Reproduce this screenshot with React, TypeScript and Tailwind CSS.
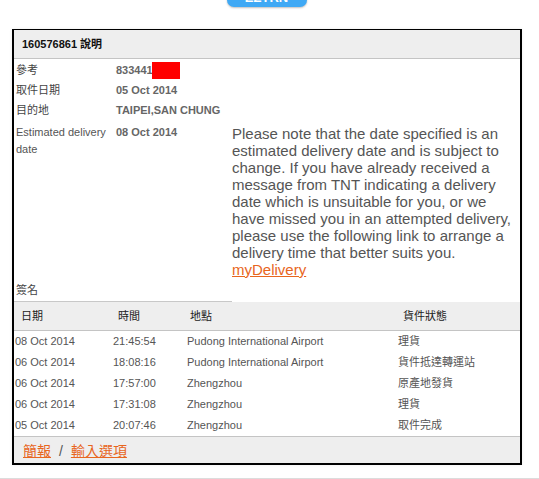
import React from 'react';

const latin = { fontFamily: '"Liberation Sans", Arial, "Noto Sans CJK TC", sans-serif' };

const events = [
  { date: '08 Oct 2014', time: '21:45:54', place: 'Pudong International Airport', status: '理貨' },
  { date: '06 Oct 2014', time: '18:08:16', place: 'Pudong International Airport', status: '貨件抵達轉運站' },
  { date: '06 Oct 2014', time: '17:57:00', place: 'Zhengzhou', status: '原產地發貨' },
  { date: '06 Oct 2014', time: '17:31:08', place: 'Zhengzhou', status: '理貨' },
  { date: '05 Oct 2014', time: '20:07:46', place: 'Zhengzhou', status: '取件完成' },
];

function InfoRow({ label, children }: { label: string; children: React.ReactNode }) {
  return (
    <div className="flex h-[20px] items-center">
      <div className="w-[102px] pl-[2px] text-[11px] text-[#444]">{label}</div>
      <div className="text-[11px] font-bold text-[#666]">{children}</div>
    </div>
  );
}

export default function App() {
  return (
    <div className="relative h-[479px] w-[539px] overflow-hidden bg-white" style={latin}>
      {/* cut-off button at the top */}
      <div className="flex justify-center">
        <div className="ml-[-6px] mt-[-20px] flex h-[27px] w-[80px] items-end justify-center overflow-hidden rounded-b-[7px] bg-[#3fa9f5] shadow-[0_1px_2px_rgba(0,0,0,0.25)]">
          <span className="mb-[3px] text-[13px] font-bold leading-[13px] text-white">EZTRN</span>
        </div>
      </div>

      <div className="ml-[12px] mt-[22px] w-[510px] border-x-2 border-b-2 border-t border-black shadow-[0_0_3px_rgba(0,0,0,0.08)]">
        <div className="flex h-[29px] items-center border-b border-[#c4c4c4] bg-[#eeeeee] pl-[8px] text-[11px] font-bold text-[#111]">
          160576861 說明
        </div>

        <div className="pt-px">
          <InfoRow label="參考">
            <span className="flex items-center">
              833441<span className="ml-[-1px] inline-block h-[17px] w-[28px] bg-[#ff0000]" />
            </span>
          </InfoRow>
          <InfoRow label="取件日期">05 Oct 2014</InfoRow>
          <InfoRow label="目的地">TAIPEI,SAN CHUNG</InfoRow>

          <div className="flex pt-[4px]">
            <div className="w-[102px] pl-[2px] text-[11px] leading-[17px] text-[#555]">Estimated delivery date</div>
            <div className="w-[116px] text-[11px] font-bold leading-[17px] text-[#666]">08 Oct 2014</div>
            <div className="w-[285px] pt-px text-[15px] leading-[17px] text-[#555]">
              Please note that the date specified is an estimated delivery date and is subject to change. If you have already received a message from TNT indicating a delivery date which is unsuitable for you, or we have missed you in an attempted delivery, please use the following link to arrange a delivery time that better suits you.
              <br />
              <a className="text-[#e8661e] underline">myDelivery</a>
            </div>
          </div>

          <div className="flex h-[24px] w-[218px] items-end border-b border-[#c8c8c8] pb-[3px] pl-[2px] text-[11px] text-[#444]">
            簽名
          </div>
        </div>

        <div className="grid h-[29px] grid-cols-[99px_74px_211px_1fr] items-center border-b border-[#c4c4c4] bg-[#eeeeee] text-[11px] text-[#222]">
          <div className="pl-[7px]">日期</div>
          <div className="pl-[5px]">時間</div>
          <div className="pl-[3px]">地點</div>
          <div className="pl-[5px]">貨件狀態</div>
        </div>

        {events.map((e, i) => (
          <div key={i} className="grid h-[21px] grid-cols-[99px_74px_211px_1fr] items-center text-[11px] text-[#555]">
            <div className="pl-[1px]">{e.date}</div>
            <div>{e.time}</div>
            <div>{e.place}</div>
            <div>{e.status}</div>
          </div>
        ))}

        <div className="flex h-[27px] items-center gap-[8px] border-t border-[#c4c4c4] bg-[#eeeeee] pl-[9px] pt-[2px] text-[14px]">
          <a className="text-[#e8661e] underline">簡報</a>
          <span className="text-[#555]">/</span>
          <a className="text-[#e8661e] underline">輸入選項</a>
        </div>
      </div>

      <div className="mt-[13px] h-px w-full bg-[#dcdcdc]" />
    </div>
  );
}
